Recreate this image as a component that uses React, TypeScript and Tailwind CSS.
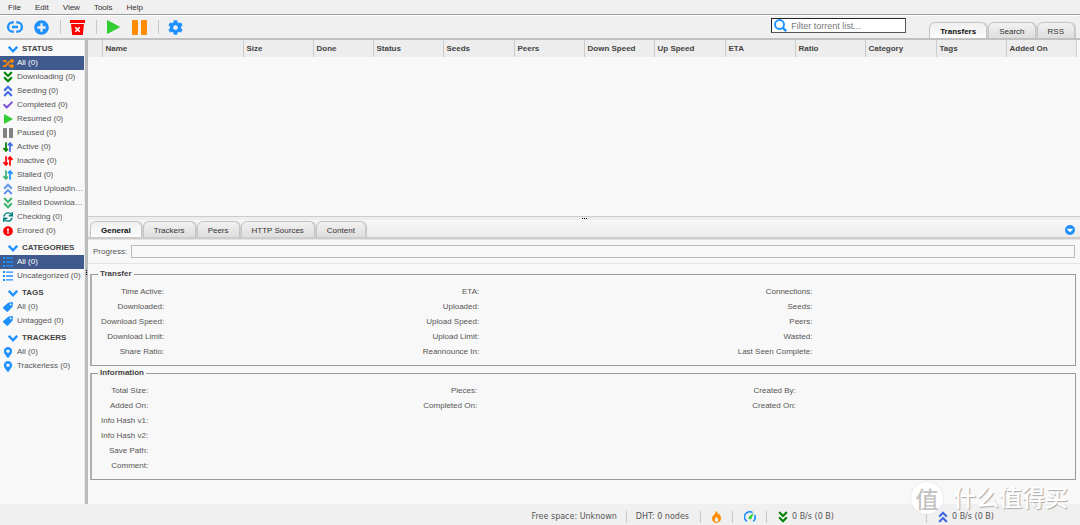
import { useState } from "react";
import type { ReactNode } from "react";
import {
  FaAngleDoubleDown,
  FaAngleDoubleUp,
  FaCheck,
  FaCog,
  FaExclamationCircle,
  FaMapMarkerAlt,
  FaPlusCircle,
  FaRandom,
  FaSync,
} from "react-icons/fa";

const MENU = ["File", "Edit", "View", "Tools", "Help"];

const MAIN_TABS = ["Transfers", "Search", "RSS"];

const DETAIL_TABS = ["General", "Trackers", "Peers", "HTTP Sources", "Content"];

const COLUMNS: { label: string; width: string }[] = [
  { label: "", width: "w-[14px]" },
  { label: "Name", width: "w-[141px]" },
  { label: "Size", width: "w-[70px]" },
  { label: "Done", width: "w-[60px]" },
  { label: "Status", width: "w-[70px]" },
  { label: "Seeds", width: "w-[71px]" },
  { label: "Peers", width: "w-[70px]" },
  { label: "Down Speed", width: "w-[70px]" },
  { label: "Up Speed", width: "w-[71px]" },
  { label: "ETA", width: "w-[70px]" },
  { label: "Ratio", width: "w-[70px]" },
  { label: "Category", width: "w-[71px]" },
  { label: "Tags", width: "w-[70px]" },
  { label: "Added On", width: "w-[70px]" },
];

const TRANSFER_ROWS = [
  ["Time Active:", "ETA:", "Connections:"],
  ["Downloaded:", "Uploaded:", "Seeds:"],
  ["Download Speed:", "Upload Speed:", "Peers:"],
  ["Download Limit:", "Upload Limit:", "Wasted:"],
  ["Share Ratio:", "Reannounce In:", "Last Seen Complete:"],
];

const INFO_ROWS = [
  ["Total Size:", "Pieces:", "Created By:"],
  ["Added On:", "Completed On:", "Created On:"],
  ["Info Hash v1:"],
  ["Info Hash v2:"],
  ["Save Path:"],
  ["Comment:"],
];

/* ICONS */

function LinkIcon() {
  return (
    <svg viewBox="0 0 16 12" className="h-3 w-4" fill="none" stroke="#1e90ff" strokeWidth="2.300">
      <path d="M6.800 1.300H5.400a4.300 4.700 0 0 0 0 9.400h1.400M9.200 1.300h1.400a4.300 4.700 0 0 1 0 9.400H9.200M5 6h6" />
    </svg>
  );
}

function TrashIcon() {
  return (
    <svg viewBox="0 0 15 15" className="size-[15px]">
      <path d="M0 0h15v3H0zM1 4h13l-1.200 11H2.200z" fill="#f00" />
      <path d="M5.300 7.200l4.400 4.600M9.700 7.200l-4.400 4.600" stroke="#fff" strokeWidth="1.600" />
    </svg>
  );
}

function PlayIcon({ className }: { className: string }) {
  return (
    <svg viewBox="0 0 12 14" preserveAspectRatio="none" className={className}>
      <path d="M0 .6Q0 0 .6.3L11.600 6.500Q12 7 11.600 7.500L.6 13.700Q0 14 0 13.400z" fill="#32cd32" />
    </svg>
  );
}

function PauseIcon({ className }: { className: string }) {
  return (
    <svg viewBox="0 0 15 15" className={className} fill="currentColor">
      <rect x="0" y="0" width="6" height="15" rx="1" />
      <rect x="9" y="0" width="6" height="15" rx="1" />
    </svg>
  );
}

function ArrowsIcon({ down, up }: { down: string; up: string }) {
  return (
    <svg viewBox="0 0 10 10" className="size-2.5" fill="none" strokeWidth="1.700">
      <path d="M3 .3v8.500M.4 6.200L3 8.900l2-2.200" stroke={down} />
      <path d="M7 9.700V1.200M5 3.300l2-2.200 2.600 2.700" stroke={up} />
    </svg>
  );
}

function ListIcon() {
  return (
    <svg viewBox="0 0 10 10" className="size-2.5" fill="#1e90ff">
      <path d="M0 0h2v2H0zM0 4h2v2H0zM0 8h2v2H0zM3 .4h7v1.400H3zM3 4.300h7v1.400H3zM3 8.200h7v1.400H3z" />
    </svg>
  );
}

function TagIcon() {
  return (
    <svg viewBox="0 0 10 10" className="size-2.5" fill="#1e90ff" fillRule="evenodd">
      <path d="M5.200.8L8.900 0Q9.900 0 10 1l-.5 3.800L5 9.600q-.7.700-1.400 0L.3 6.400q-.6-.7 0-1.400zM7.700 1.500a.9.9 0 1 0 .01 0z" />
    </svg>
  );
}

function ChevronIcon() {
  return (
    <svg viewBox="0 0 10 7" className="h-[7px] w-2.5" fill="none" stroke="#1e90ff" strokeWidth="2.300">
      <path d="M.8.8L5 5.300 9.200.8" />
    </svg>
  );
}

function FlameIcon() {
  return (
    <svg viewBox="0 0 9 12" className="h-3 w-[9px]" fillRule="evenodd" fill="#ff8c00">
      <path d="M4 0c2.500 1.500 1.700 3 2.600 4 .4-.4.500-.9.500-1.400C8.300 4 9 5.500 9 7.300 9 10 7 12 4.500 12S0 10 0 7.500C0 5 1.500 4.400 2.700 2.900 3.400 2 3.900 1.200 4 0zM4.500 5.500C4 7 2.600 7.400 2.600 9a1.900 1.900 0 0 0 3.800 0c0-1.500-1.400-2-1.900-3.500z" />
    </svg>
  );
}

function GaugeIcon() {
  return (
    <svg viewBox="0 0 12 12" className="size-3" fill="none">
      <path d="M2.800 10.300A5 5 0 0 1 8.500 1.600M10.500 4a5 5 0 0 1-1.300 6.300" stroke="#1e90ff" strokeWidth="1.600" />
      <path d="M9.600 1.800L7.500 7.500a1.600 1.600 0 1 1-2.600-1.800z" fill="#32cd32" />
    </svg>
  );
}

function SearchIcon() {
  return (
    <svg viewBox="0 0 13 13" className="size-[13px] shrink-0" fill="none" stroke="#1e90ff">
      <circle cx="5.500" cy="5.500" r="4.500" strokeWidth="1.900" />
      <path d="M8.600 8.600l3.600 3.600" strokeWidth="2.300" />
    </svg>
  );
}

function CollapseIcon() {
  return (
    <svg viewBox="0 0 10 10" className="size-2.5">
      <circle cx="5" cy="5" r="5" fill="#1e90ff" />
      <path d="M2.300 3.700h5.400v1L5 7.300 2.300 4.700z" fill="#fff" />
    </svg>
  );
}

/* SIDEBAR */

type Filter = { label: string; icon: ReactNode };

const SECTIONS: { title: string; selected?: string; filters: Filter[] }[] = [
  {
    title: "STATUS",
    selected: "All (0)",
    filters: [
      { label: "All (0)", icon: <FaRandom className="size-[11px] shrink-0 text-[#ff8c00]" /> },
      { label: "Downloading (0)", icon: <FaAngleDoubleDown className="size-3.5 shrink-0 text-[#008000]" /> },
      { label: "Seeding (0)", icon: <FaAngleDoubleUp className="size-3.5 shrink-0 text-[#4169e1]" /> },
      { label: "Completed (0)", icon: <FaCheck className="size-2.5 text-[#7b4fd8]" /> },
      { label: "Resumed (0)", icon: <PlayIcon className="h-2.5 w-[9px]" /> },
      { label: "Paused (0)", icon: <PauseIcon className="size-2.5 text-[#808080]" /> },
      { label: "Active (0)", icon: <ArrowsIcon down="#008000" up="#4169e1" /> },
      { label: "Inactive (0)", icon: <ArrowsIcon down="#ff0000" up="#ff0000" /> },
      { label: "Stalled (0)", icon: <ArrowsIcon down="#3cb371" up="#1e90ff" /> },
      { label: "Stalled Uploading (0)", icon: <FaAngleDoubleUp className="size-3.5 shrink-0 text-[#6495ed]" /> },
      { label: "Stalled Downloading (0)", icon: <FaAngleDoubleDown className="size-3.5 shrink-0 text-[#3cb371]" /> },
      { label: "Checking (0)", icon: <FaSync className="size-2.5 text-[#008080]" /> },
      { label: "Errored (0)", icon: <FaExclamationCircle className="size-2.5 text-[#ff0000]" /> },
    ],
  },
  {
    title: "CATEGORIES",
    selected: "All (0)",
    filters: [
      { label: "All (0)", icon: <ListIcon /> },
      { label: "Uncategorized (0)", icon: <ListIcon /> },
    ],
  },
  {
    title: "TAGS",
    filters: [
      { label: "All (0)", icon: <TagIcon /> },
      { label: "Untagged (0)", icon: <TagIcon /> },
    ],
  },
  {
    title: "TRACKERS",
    filters: [
      { label: "All (0)", icon: <FaMapMarkerAlt className="size-[11px] text-[#1e90ff]" /> },
      { label: "Trackerless (0)", icon: <FaMapMarkerAlt className="size-[11px] text-[#1e90ff]" /> },
    ],
  },
];

function FilterSection({ title, selected, filters }: (typeof SECTIONS)[number]) {
  const [current, setCurrent] = useState(selected);

  return (
    <section className="mb-[3px]">
      <h2 className="flex h-3.5 items-center gap-1 pl-2 font-bold text-[#444]">
        <ChevronIcon />
        {title}
      </h2>
      <ul>
        {filters.map((f) => (
          <li key={f.label}>
            <button
              type="button"
              onClick={() => setCurrent(f.label)}
              className={`flex h-3.5 w-full items-center gap-1 pl-[3px] text-left ${
                current === f.label ? "bg-[#415a8d] text-white" : ""
              }`}
            >
              <span className="flex w-2.5 shrink-0 justify-center">{f.icon}</span>
              <span className="truncate">{f.label}</span>
            </button>
          </li>
        ))}
      </ul>
    </section>
  );
}

/* SHARED */

function Tabs({ items }: { items: string[] }) {
  const [active, setActive] = useState(items[0]);

  return (
    <div className="flex gap-px" role="tablist">
      {items.map((item) => (
        <button
          key={item}
          type="button"
          role="tab"
          aria-selected={active === item}
          onClick={() => setActive(item)}
          className={`h-4 rounded-t-md border border-b-0 border-[#c4c4c4] px-2.5 pt-0.5 shadow-[1px_0_1px_#ccc] ${
            active === item
              ? "bg-linear-to-b from-[#f0f0f0] to-[#fcfcfc] font-bold text-[#111]"
              : "bg-linear-to-b from-[#f1f1f1] to-[#dedede] text-[#333]"
          }`}
        >
          {item}
        </button>
      ))}
    </div>
  );
}

function ToolButton({ label, children }: { label: string; children: ReactNode }) {
  return (
    <button type="button" aria-label={label} className="flex h-4 min-w-3 items-center justify-center">
      {children}
    </button>
  );
}

function Separator({ className }: { className: string }) {
  return <span className={`w-px bg-[#c8c8c8] ${className}`} />;
}

function DetailGroup({ title, rows }: { title: string; rows: string[][] }) {
  return (
    <fieldset className="border border-l-2 border-[#999] border-l-[#b0b0b0] pt-[5px] pr-1 pb-1.5 pl-[9px]">
      <legend className="-ml-[3px] px-0.5 leading-2.5 font-bold text-[#444]">{title}</legend>
      <table className="w-full">
        <tbody>
          {rows.map((row) => (
            <tr key={row[0]} className="h-[15px]">
              {row.map((label) => [
                <th
                  key={label}
                  scope="row"
                  className="p-0 text-right font-normal whitespace-nowrap"
                >
                  {label}
                </th>,
                <td key={`${label}-value`} className="w-1/3 p-0" />,
              ])}
            </tr>
          ))}
        </tbody>
      </table>
    </fieldset>
  );
}

export default function App() {
  return (
    <div className="relative flex h-screen flex-col bg-[#f0f0f0] font-['Liberation_Sans',Arial,sans-serif] text-[8px] leading-3 text-[#555]">
      {/* MENU */}
      <nav className="flex h-[15px] items-center gap-3.5 border-b border-[#999] px-2 pt-0.5 text-[#333]">
        {MENU.map((m) => (
          <button key={m} type="button">
            {m}
          </button>
        ))}
      </nav>

      {/* TOOLBAR */}
      <header className="flex h-[25px] justify-between border-t border-b-2 border-t-white border-b-[#c0c0c0]">
        <div className="flex items-center pl-[7px]">
          <ToolButton label="Add torrent link">
            <LinkIcon />
          </ToolButton>
          <span className="w-[11px]" />
          <ToolButton label="Add torrent file">
            <FaPlusCircle className="size-[15px] text-[#1e90ff]" />
          </ToolButton>
          <Separator className="mr-[9px] ml-[11px] h-3.5" />
          <ToolButton label="Delete">
            <TrashIcon />
          </ToolButton>
          <Separator className="mr-2.5 ml-[11px] h-3.5" />
          <ToolButton label="Resume">
            <PlayIcon className="h-3.5 w-[13px]" />
          </ToolButton>
          <span className="w-3" />
          <ToolButton label="Pause">
            <PauseIcon className="size-[15px] text-[#ff8c00]" />
          </ToolButton>
          <Separator className="mr-[9px] ml-[11px] h-3.5" />
          <ToolButton label="Options">
            <FaCog className="size-[15px] text-[#1e90ff]" />
          </ToolButton>
        </div>

        <div className="flex pr-[5px]">
          <label className="mt-0.5 mr-[23px] flex h-[15px] w-[135px] items-center border border-t-[#222] border-r-[#555] border-b-[#555] border-l-[#222] bg-white pl-0.5">
            <SearchIcon />
            <input
              type="text"
              aria-label="Filter torrent list"
              placeholder="Filter torrent list..."
              className="ml-1 w-full min-w-0 bg-transparent text-[9px] outline-none placeholder:text-[#777]"
            />
          </label>
          <div className="self-end">
            <Tabs items={MAIN_TABS} />
          </div>
        </div>
      </header>

      <div className="flex min-h-0 flex-1">
        {/* FILTERS */}
        <aside className="w-[84px] shrink-0 overflow-hidden bg-[#f8f8f8] pt-0.5">
          {SECTIONS.map((s) => (
            <FilterSection key={s.title} {...s} />
          ))}
        </aside>

        <div className="flex w-1 shrink-0 flex-col items-center justify-center gap-px border-l border-[#eee] bg-[#bbb]">
          <span className="size-px bg-black" />
          <span className="size-px bg-black" />
          <span className="size-px bg-black" />
        </div>

        <main className="flex min-w-0 flex-1 flex-col bg-[#f8f8f8]">
          {/* TORRENTS */}
          <div className="min-h-0 flex-1 overflow-hidden">
            <table className="table-fixed">
              <thead>
                <tr className="h-[17px] bg-[#ededed]">
                  {COLUMNS.map((c) => (
                    <th
                      key={c.label}
                      scope="col"
                      className={`border-r border-[#ccc] p-0 pl-[3px] text-left text-[#444] ${c.width}`}
                    >
                      {c.label}
                    </th>
                  ))}
                </tr>
              </thead>
              <tbody />
            </table>
          </div>

          <div className="flex h-1 items-center justify-center gap-px border-t border-[#ccc] bg-[#eee]">
            <span className="size-px bg-black" />
            <span className="size-px bg-black" />
            <span className="size-px bg-black" />
          </div>

          {/* DETAILS */}
          <div className="flex h-[19px] items-end justify-between border-b-2 border-[#ccc] bg-linear-to-b from-[#f7f7f7] to-[#ececec] pr-[5px] pl-0.5">
            <Tabs items={DETAIL_TABS} />
            <button type="button" aria-label="Collapse details" className="mb-0.5">
              <CollapseIcon />
            </button>
          </div>

          <div className="h-[265px] border-t border-[#e2e2e2]">
            <div className="flex h-6 items-center gap-1 border-b border-[#e4e4e4] pr-[5px] pl-[5px]">
              <span id="progress-label">Progress:</span>
              <div
                role="progressbar"
                aria-labelledby="progress-label"
                className="h-[13px] flex-1 border border-[#bbb]"
              />
            </div>
            <div className="flex flex-col gap-0.5 pt-[5px] pr-1 pl-0.5">
              <DetailGroup title="Transfer" rows={TRANSFER_ROWS} />
              <DetailGroup title="Information" rows={INFO_ROWS} />
            </div>
          </div>
        </main>
      </div>

      {/* STATUS BAR */}
      <footer className="flex h-[21px] items-center justify-end pt-1 font-['DejaVu_Sans',Verdana,sans-serif]">
        <span>Free space: Unknown</span>
        <Separator className="mx-[9px] h-3" />
        <span>DHT: 0 nodes</span>
        <Separator className="mx-[11px] h-3" />
        <FlameIcon />
        <Separator className="mx-[11px] h-3" />
        <button type="button" aria-label="Alternative speed limits">
          <GaugeIcon />
        </button>
        <Separator className="mr-[9px] ml-2.5 h-3" />
        <button type="button" className="flex w-[150px] items-center gap-0.5">
          <FaAngleDoubleDown className="size-3.5 text-[#008000]" />
          0 B/s (0 B)
        </button>
        <Separator className="mr-[9px] h-3" />
        <button type="button" className="flex w-36 items-center gap-0.5">
          <FaAngleDoubleUp className="size-3.5 text-[#4169e1]" />
          0 B/s (0 B)
        </button>
      </footer>

      {/* WATERMARK */}
      <div className="pointer-events-none absolute right-3 bottom-[11px] flex items-center gap-2.5 font-['Noto_Sans_CJK_SC',sans-serif]">
        <span className="flex size-8 items-center justify-center rounded-full bg-white text-[23px] font-medium text-[#c4c4c4] shadow-[0_0_2px_#ddd]">
          值
        </span>
        <span className="pb-1 text-[23px] leading-6 font-medium text-white [text-shadow:1px_1px_1px_#aaa]">
          什么值得买
        </span>
      </div>
    </div>
  );
}
